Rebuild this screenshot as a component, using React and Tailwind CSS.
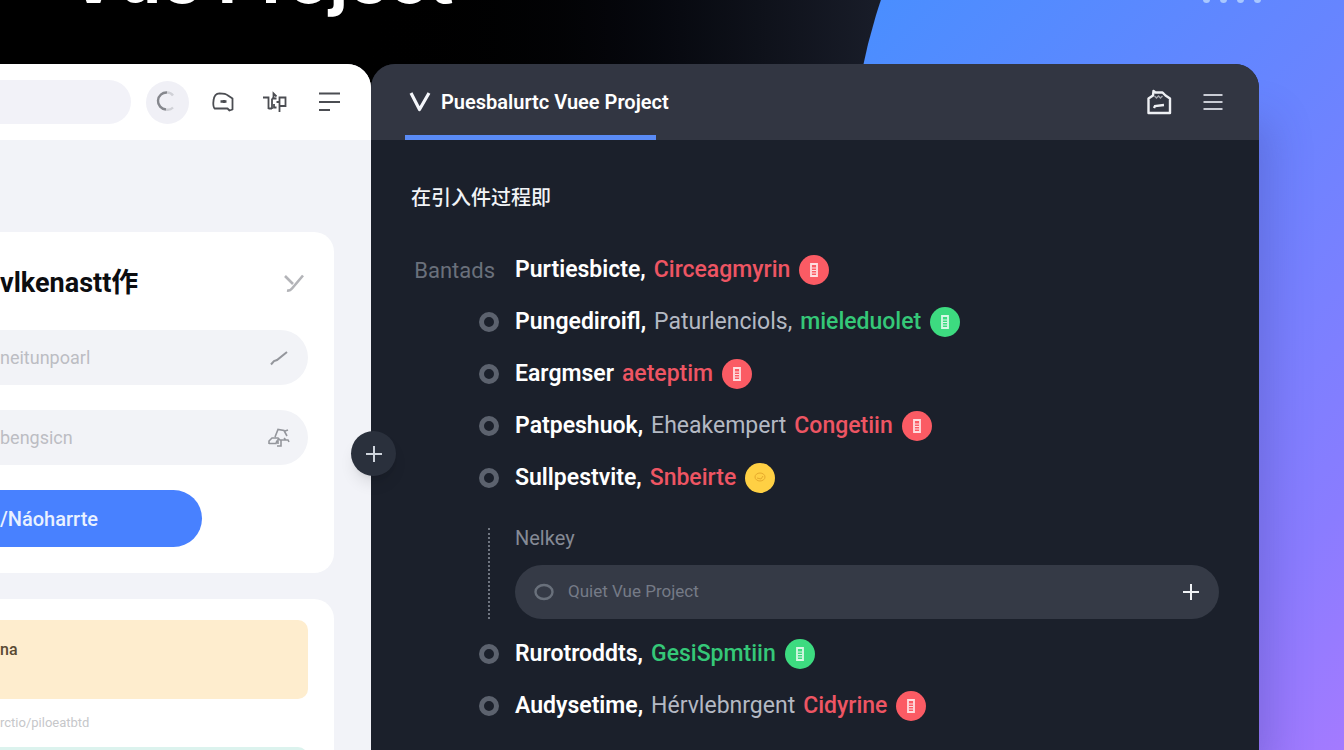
import React from 'react'

const IconChat = () => (
  <svg className="w-6 h-6" fill="none" stroke="currentColor" strokeWidth={1.8} viewBox="0 0 24 24">
    <path strokeLinejoin="round" d="M6 18.5H3.500C2.300 17 2 14 2.600 10C3 6.500 5 3.500 8.500 3.300C13 3.300 15 3.600 17 5.500L21.500 8.500V19.500L18.500 20.500L16.500 18.500H6z" />
    <path strokeWidth={2.400} d="M9.500 11.500h6M13 10v3" />
  </svg>
)

const IconTranslate = () => (
  <svg className="w-6 h-6" fill="none" stroke="currentColor" strokeWidth={1.8} viewBox="0 0 24 24">
    <path d="M0 7.500h5.500V19M9 18.500H5.500M9 8.500V19M9 8.500h4.500M10.500 8V3.500l3 3M11 14v3.500h2.500M16.500 6.500V22M13.500 12h3M16.500 7.500h6v8.500h-6" />
  </svg>
)

const IconMenuShort = () => (
  <svg className="w-6 h-6" fill="none" stroke="currentColor" strokeWidth={2} viewBox="0 0 24 24">
    <path d="M2 3.500h21M2 12h21M2 20h11" />
  </svg>
)

const IconBox = () => (
  <svg className="w-7 h-7" fill="none" stroke="currentColor" viewBox="0 0 28 28">
    <path strokeWidth={2.400} strokeLinejoin="round" d="M3.500 25V10.500L8 7.500L8.500 3L10.500 4.500H17.500L20.500 7.500L25 10.500V25H3.500z" />
    <path strokeWidth={1.400} opacity="0.6" d="M9.500 8l2 2 2-2 2 2 2-2" />
    <path strokeWidth={2.400} d="M9 20l1-2 9-1" />
  </svg>
)

const IconMenu = () => (
  <svg className="w-6 h-6" fill="none" stroke="currentColor" strokeWidth={2} viewBox="0 0 24 24">
    <path d="M2.500 5h19M2.500 12h19M2.500 19h19" />
  </svg>
)

const IconPlus = () => (
  <svg className="w-5 h-5" fill="none" stroke="currentColor" strokeWidth={2} viewBox="0 0 20 20">
    <path d="M2 10h16M10 2v16" />
  </svg>
)

const IconCheck = () => (
  <svg className="w-5 h-5" fill="none" stroke="currentColor" strokeWidth={2.600} viewBox="0 0 20 20">
    <path d="M1 3l8 8M19 2.500L8 15.500q-2 2.500-5 2" />
  </svg>
)

const IconSlash = () => (
  <svg className="w-5 h-5" fill="none" stroke="currentColor" strokeWidth={2} viewBox="0 0 20 20">
    <path d="M2 16.500l3-3.500 3-1L18 4" />
  </svg>
)

const IconPlant = () => (
  <svg className="w-6 h-6" fill="none" stroke="currentColor" strokeWidth={1.600} viewBox="0 0 24 24">
    <path d="M8 11l3-7.500 6 1 3 5.500M18 5l3-1M2 18v-3l3-3h6l2 2h8l1 2M2 17.500h7l1-3M11 13v5M14 14v6h-4M17 12l2 2" />
  </svg>
)

const badgeColors = {
  red: 'bg-[#fb5b64]',
  green: 'bg-[#3ddb80]',
  yellow: 'bg-[#ffd044]',
}

const textColors = {
  red: 'text-[#ee5563]',
  green: 'text-[#35c878]',
}

function Badge({ tone }) {
  return (
    <span className={`ml-[9px] flex h-[30px] w-[30px] shrink-0 items-center justify-center rounded-full text-white/80 ${badgeColors[tone]}`}>
      {tone === 'yellow' ? (
        <svg className="w-4 h-4 text-[#e6a92c]" fill="none" stroke="currentColor" viewBox="0 0 16 16">
          <ellipse cx="8" cy="7" rx="5" ry="4" />
          <path d="M5 8l4 1 2-3" />
        </svg>
      ) : (
        <svg className="w-4 h-4" fill="none" stroke="currentColor" viewBox="0 0 16 16">
          <path strokeWidth={1.800} d="M5 2h6v12H5z" />
          <path d="M6 6h4M6 8.500h4M6 11h4" />
        </svg>
      )}
    </span>
  )
}

const firstItems = [
  { label: 'Bantads', name: 'Purtiesbicte,', tag: 'Circeagmyrin', color: 'red', badge: 'red' },
  { name: 'Pungediroifl,', note: 'Paturlenciols,', tag: 'mieleduolet', color: 'green', badge: 'green' },
  { name: 'Eargmser', tag: 'aeteptim', color: 'red', badge: 'red' },
  { name: 'Patpeshuok,', note: 'Eheakempert', tag: 'Congetiin', color: 'red', badge: 'red' },
  { name: 'Sullpestvite,', tag: 'Snbeirte', color: 'red', badge: 'yellow' },
]

const lastItems = [
  { name: 'Rurotroddts,', tag: 'GesiSpmtiin', color: 'green', badge: 'green' },
  { name: 'Audysetime,', note: 'Hérvlebnrgent', tag: 'Cidyrine', color: 'red', badge: 'red' },
]

function ItemRow({ item }) {
  return (
    <li>
      <label className="flex h-[52px] items-center gap-4">
        <span className="flex w-[88px] shrink-0 justify-end">
          {item.label ? (
            <span className="pr-1 text-[22px] text-[#6a707b]">{item.label}</span>
          ) : (
            <input
              type="radio"
              name="item"
              className="h-5 w-5 appearance-none rounded-full border-[5px] border-[#5c626e]"
            />
          )}
        </span>
        <span className="flex items-center text-[23px] leading-7">
          <span className="font-semibold text-white">{item.name}</span>
          {item.note && <span className="ml-2 text-[#b4b9c3]">{item.note}</span>}
          <span className={`ml-2 font-medium ${textColors[item.color]}`}>{item.tag}</span>
          <Badge tone={item.badge} />
        </span>
      </label>
    </li>
  )
}

function LightPanel() {
  return (
    <section className="flex w-[371px] shrink-0 flex-col overflow-hidden rounded-tr-[24px] bg-[#f2f3f8]">
      <div className="flex h-[76px] shrink-0 items-center bg-white pr-[30px] text-[#4b4d52]">
        <input type="search" aria-label="Search" className="h-11 w-0 flex-1 rounded-r-full bg-[#f2f2f8]" />
        <button aria-label="Refresh" className="ml-[15px] flex h-[43px] w-[43px] items-center justify-center rounded-full bg-[#f0f0f6]">
          <svg className="w-6 h-6" fill="none" viewBox="0 0 24 24">
            <path stroke="#85878d" strokeWidth={2.400} d="M11 2.500A8.500 8.500 0 0 0 10 19.500" />
            <path stroke="#d0d1d7" strokeWidth={2.400} d="M11 2.500q4 0 6 3M10 19.500q4 1 7-2" />
          </svg>
        </button>
        <button aria-label="Messages" className="ml-[22px]"><IconChat /></button>
        <button aria-label="Language" className="ml-7"><IconTranslate /></button>
        <button aria-label="Menu" className="ml-[30px]"><IconMenuShort /></button>
      </div>

      <div className="mr-[37px] mt-[92px] rounded-r-[20px] bg-white pb-[26px] pr-[26px]">
        <div className="flex h-[98px] items-center justify-between pr-1 pt-1">
          <h2 className="text-[27px] font-bold text-[#0c0d10]">vlkenastt作</h2>
          <button aria-label="Confirm" className="text-[#b3b4b8]"><IconCheck /></button>
        </div>
        <div className="flex h-[55px] items-center rounded-r-full bg-[#f2f3f7] pr-[19px] text-[#94969c]">
          <input aria-label="First field" placeholder="neitunpoarl" className="min-w-0 flex-1 text-lg placeholder:text-[#bcbdc3]" />
          <IconSlash />
        </div>
        <div className="mt-[25px] flex h-[55px] items-center rounded-r-full bg-[#f2f3f7] pr-[17px] text-[#94969c]">
          <input aria-label="Second field" placeholder="bengsicn" className="min-w-0 flex-1 text-lg placeholder:text-[#bcbdc3]" />
          <IconPlant />
        </div>
        <button className="mt-[25px] block h-[57px] w-[202px] rounded-r-full bg-[#4881ff] text-left text-[20px] font-medium text-[#e9f1ff]">
          /Náoharrte
        </button>
      </div>

      <div className="mr-[37px] mt-[26px] flex-1 rounded-tr-[20px] bg-white pr-[26px] pt-[21px]">
        <div className="h-[79px] rounded-r-[10px] bg-[#feedce] pt-[18px] text-base font-medium text-[#5a4a33]">na</div>
        <p className="pt-[14px] text-[13px] leading-5 text-[#c6c7ca]">rctio/piloeatbtd</p>
        <div className="mt-[14px] h-[79px] rounded-tr-[10px] bg-[#dcf3ee]" />
      </div>
    </section>
  )
}

function DarkPanel() {
  return (
    <section className="relative mr-[85px] min-w-0 flex-1 rounded-t-[24px] bg-[#1b202b] shadow-[28px_40px_40px_-16px_rgba(60,50,130,0.25)]">
      <header className="flex h-[76px] justify-between rounded-t-[24px] bg-[#323642] pl-[34px] pr-[34px]">
        <div className="flex flex-col pt-[5px]">
          <div className="flex flex-1 items-center gap-[10px] pl-1">
            <svg className="h-[22px] w-[22px]" fill="none" stroke="#f4f6fa" strokeWidth={3.200} strokeLinejoin="round" viewBox="0 0 22 22">
              <path d="M2 2L10.500 18.500L20 2" />
            </svg>
            <h1 className="text-[20px] font-semibold text-white">Puesbalurtc Vuee Project</h1>
          </div>
          <div className="h-[5px] w-[251px] bg-[#5a8bf5]" />
        </div>
        <div className="flex items-center gap-7">
          <button aria-label="Archive" className="text-[#eef0f4]"><IconBox /></button>
          <button aria-label="Menu" className="text-[#c9ccd4]"><IconMenu /></button>
        </div>
      </header>

      <div className="px-10 pt-11">
        <h2 className="text-[20px] font-medium leading-7 text-[#f1f3f6]">在引入件过程即</h2>
        <ul className="mt-8">
          {firstItems.map((item) => <ItemRow key={item.name} item={item} />)}
        </ul>

        <div className="mt-5 flex gap-4">
          <div className="flex w-[88px] shrink-0 justify-end pr-[9px] pt-1">
            <div className="border-l-2 border-dotted border-[#6f7580]" />
          </div>
          <div className="flex-1">
            <label htmlFor="project" className="block text-[20px] leading-7 text-[#858a95]">Nelkey</label>
            <div className="mt-[13px] flex h-[54px] items-center rounded-full bg-[#353a46] pl-[19px] pr-[18px]">
              <svg className="w-5 h-5" fill="none" stroke="#69707b" strokeWidth={2.400} viewBox="0 0 20 20">
                <ellipse cx="10" cy="10" rx="8.500" ry="7" />
              </svg>
              <input
                id="project"
                placeholder="Quiet Vue Project"
                className="ml-[14px] min-w-0 flex-1 text-[17px] text-white placeholder:text-[#757b87]"
              />
              <button aria-label="Add" className="text-[#f0f2f5]"><IconPlus /></button>
            </div>
          </div>
        </div>

        <ul className="mt-[9px]">
          {lastItems.map((item) => <ItemRow key={item.name} item={item} />)}
        </ul>
      </div>

      {/* round handle sitting on the seam between the panels */}
      <button
        aria-label="Split"
        className="absolute -left-5 top-[367px] flex h-[45px] w-[45px] items-center justify-center rounded-full bg-[#2a303c] text-[#cfd4dc] shadow-lg"
      >
        <IconPlus />
      </button>
    </section>
  )
}

export default function App() {
  return (
    <div className="relative flex h-screen flex-col overflow-hidden bg-linear-to-r from-black from-25% to-[#181c28] to-65% font-[Roboto,'Noto_Sans_CJK_SC',sans-serif]">
      {/* backdrop circle */}
      <div className="absolute -top-[410px] left-[850px] h-[1200px] w-[1200px] rounded-full bg-[linear-gradient(135deg,#4a8eff_311px,#6685ff_639px,#8a7cff_997px,#a47aff_1170px)]" />

      <div className="relative flex h-16 shrink-0 items-start justify-between overflow-hidden pl-[68px] pr-[83px]">
        <p className="-mt-[58px] font-[Inter] text-[68px] font-bold leading-[72px] text-white">Vue Project</p>
        <div className="-mt-1 flex gap-[10px]">
          <span className="h-[7px] w-[7px] rounded-full bg-[#a9c8ff]" />
          <span className="h-[7px] w-[7px] rounded-full bg-[#a9c8ff]" />
          <span className="h-[7px] w-[7px] rounded-full bg-[#a9c8ff]" />
          <span className="h-[7px] w-[7px] rounded-full bg-[#a9c8ff]" />
        </div>
      </div>

      <main className="relative flex min-h-0 flex-1">
        <LightPanel />
        <DarkPanel />
      </main>
    </div>
  )
}
